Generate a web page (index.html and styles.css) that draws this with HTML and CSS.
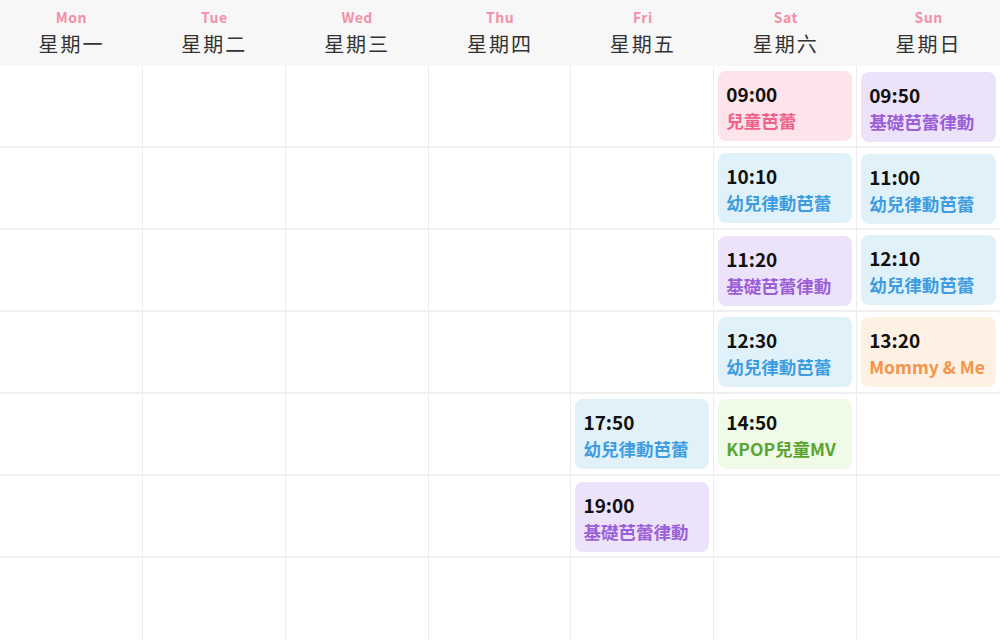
FILE: index.html
```html
<!DOCTYPE html>
<html lang="zh-Hant">
<head>
<meta charset="utf-8">
<link rel="stylesheet" href="styles.css">
</head>
<body>
<div class="cal">
  <div class="head">
    <div class="hd"><span class="en">Mon</span><span class="zh">星期一</span></div>
    <div class="hd"><span class="en">Tue</span><span class="zh">星期二</span></div>
    <div class="hd"><span class="en">Wed</span><span class="zh">星期三</span></div>
    <div class="hd"><span class="en">Thu</span><span class="zh">星期四</span></div>
    <div class="hd"><span class="en">Fri</span><span class="zh">星期五</span></div>
    <div class="hd"><span class="en">Sat</span><span class="zh">星期六</span></div>
    <div class="hd"><span class="en">Sun</span><span class="zh">星期日</span></div>
  </div>
  <div class="grid">
    <!-- row 1 -->
    <div class="cell"></div><div class="cell"></div><div class="cell"></div><div class="cell"></div><div class="cell"></div>
    <div class="cell"><div class="ev pink"><b>09:00</b><span>兒童芭蕾</span></div></div>
    <div class="cell"><div class="ev purple low"><b>09:50</b><span>基礎芭蕾律動</span></div></div>
    <!-- row 2 -->
    <div class="cell"></div><div class="cell"></div><div class="cell"></div><div class="cell"></div><div class="cell"></div>
    <div class="cell"><div class="ev blue"><b>10:10</b><span>幼兒律動芭蕾</span></div></div>
    <div class="cell"><div class="ev blue low"><b>11:00</b><span>幼兒律動芭蕾</span></div></div>
    <!-- row 3 -->
    <div class="cell"></div><div class="cell"></div><div class="cell"></div><div class="cell"></div><div class="cell"></div>
    <div class="cell"><div class="ev purple low"><b>11:20</b><span>基礎芭蕾律動</span></div></div>
    <div class="cell"><div class="ev blue"><b>12:10</b><span>幼兒律動芭蕾</span></div></div>
    <!-- row 4 -->
    <div class="cell"></div><div class="cell"></div><div class="cell"></div><div class="cell"></div><div class="cell"></div>
    <div class="cell"><div class="ev blue"><b>12:30</b><span>幼兒律動芭蕾</span></div></div>
    <div class="cell"><div class="ev orange"><b>13:20</b><span>Mommy &amp; Me</span></div></div>
    <!-- row 5 -->
    <div class="cell"></div><div class="cell"></div><div class="cell"></div><div class="cell"></div>
    <div class="cell"><div class="ev blue"><b>17:50</b><span>幼兒律動芭蕾</span></div></div>
    <div class="cell"><div class="ev green"><b>14:50</b><span>KPOP兒童MV</span></div></div>
    <div class="cell"></div>
    <!-- row 6 -->
    <div class="cell"></div><div class="cell"></div><div class="cell"></div><div class="cell"></div>
    <div class="cell"><div class="ev purple low"><b>19:00</b><span>基礎芭蕾律動</span></div></div>
    <div class="cell"></div><div class="cell"></div>
    <!-- row 7 -->
    <div class="cell last"></div><div class="cell last"></div><div class="cell last"></div><div class="cell last"></div><div class="cell last"></div><div class="cell last"></div><div class="cell last"></div>
  </div>
</div>
</body>
</html>
```
FILE: styles.css
```css
html, body {
  margin: 0;
  padding: 0;
  background: #ffffff;
}
body {
  font-family: "Noto Sans CJK TC", "Noto Sans", sans-serif;
  width: 1000px;
  height: 640px;
  overflow: hidden;
}
.cal {
  width: 1000px;
}
.head {
  display: grid;
  grid-template-columns: repeat(7, 1fr);
  height: 66px;
  background: #f7f7f7;
}
.hd {
  display: flex;
  flex-direction: column;
  align-items: center;
  padding-top: 7px;
}
.en {
  font-size: 14px;
  font-weight: 700;
  color: #f48fa8;
  line-height: 20px;
  letter-spacing: 0.5px;
}
.zh {
  font-size: 20px;
  color: #333333;
  line-height: 28px;
  margin-top: 3px;
  letter-spacing: 2px;
}
.grid {
  display: grid;
  grid-template-columns: repeat(7, 1fr);
  grid-template-rows: repeat(7, 82px);
}
.cell {
  border-right: 1px solid #ededed;
  border-bottom: 2px solid #efefef;
  padding: 5px 4px 0 4px;
  box-sizing: border-box;
}
.cell.last {
  border-bottom: none;
}
.cell:nth-child(7n) {
  border-right: none;
}
.ev {
  height: 70px;
  border-radius: 8px;
  padding: 10px 8px 0 8px;
  box-sizing: border-box;
  display: flex;
  flex-direction: column;
  white-space: nowrap;
}
.ev.low {
  margin-top: 1px;
}
.ev b {
  font-size: 19px;
  font-weight: 700;
  color: #111111;
  line-height: 26px;
}
.ev span {
  font-size: 17.5px;
  font-weight: 700;
  line-height: 28px;
}
.pink { background: #fde4ea; }
.pink span { color: #f0628a; }
.purple { background: #ece2fa; }
.purple span { color: #9b5fd8; }
.blue { background: #e1f1fa; }
.blue span { color: #3d9de0; }
.orange { background: #fff0e4; }
.orange span { color: #f49446; }
.green { background: #effbe6; }
.green span { color: #5ba431; }
```
